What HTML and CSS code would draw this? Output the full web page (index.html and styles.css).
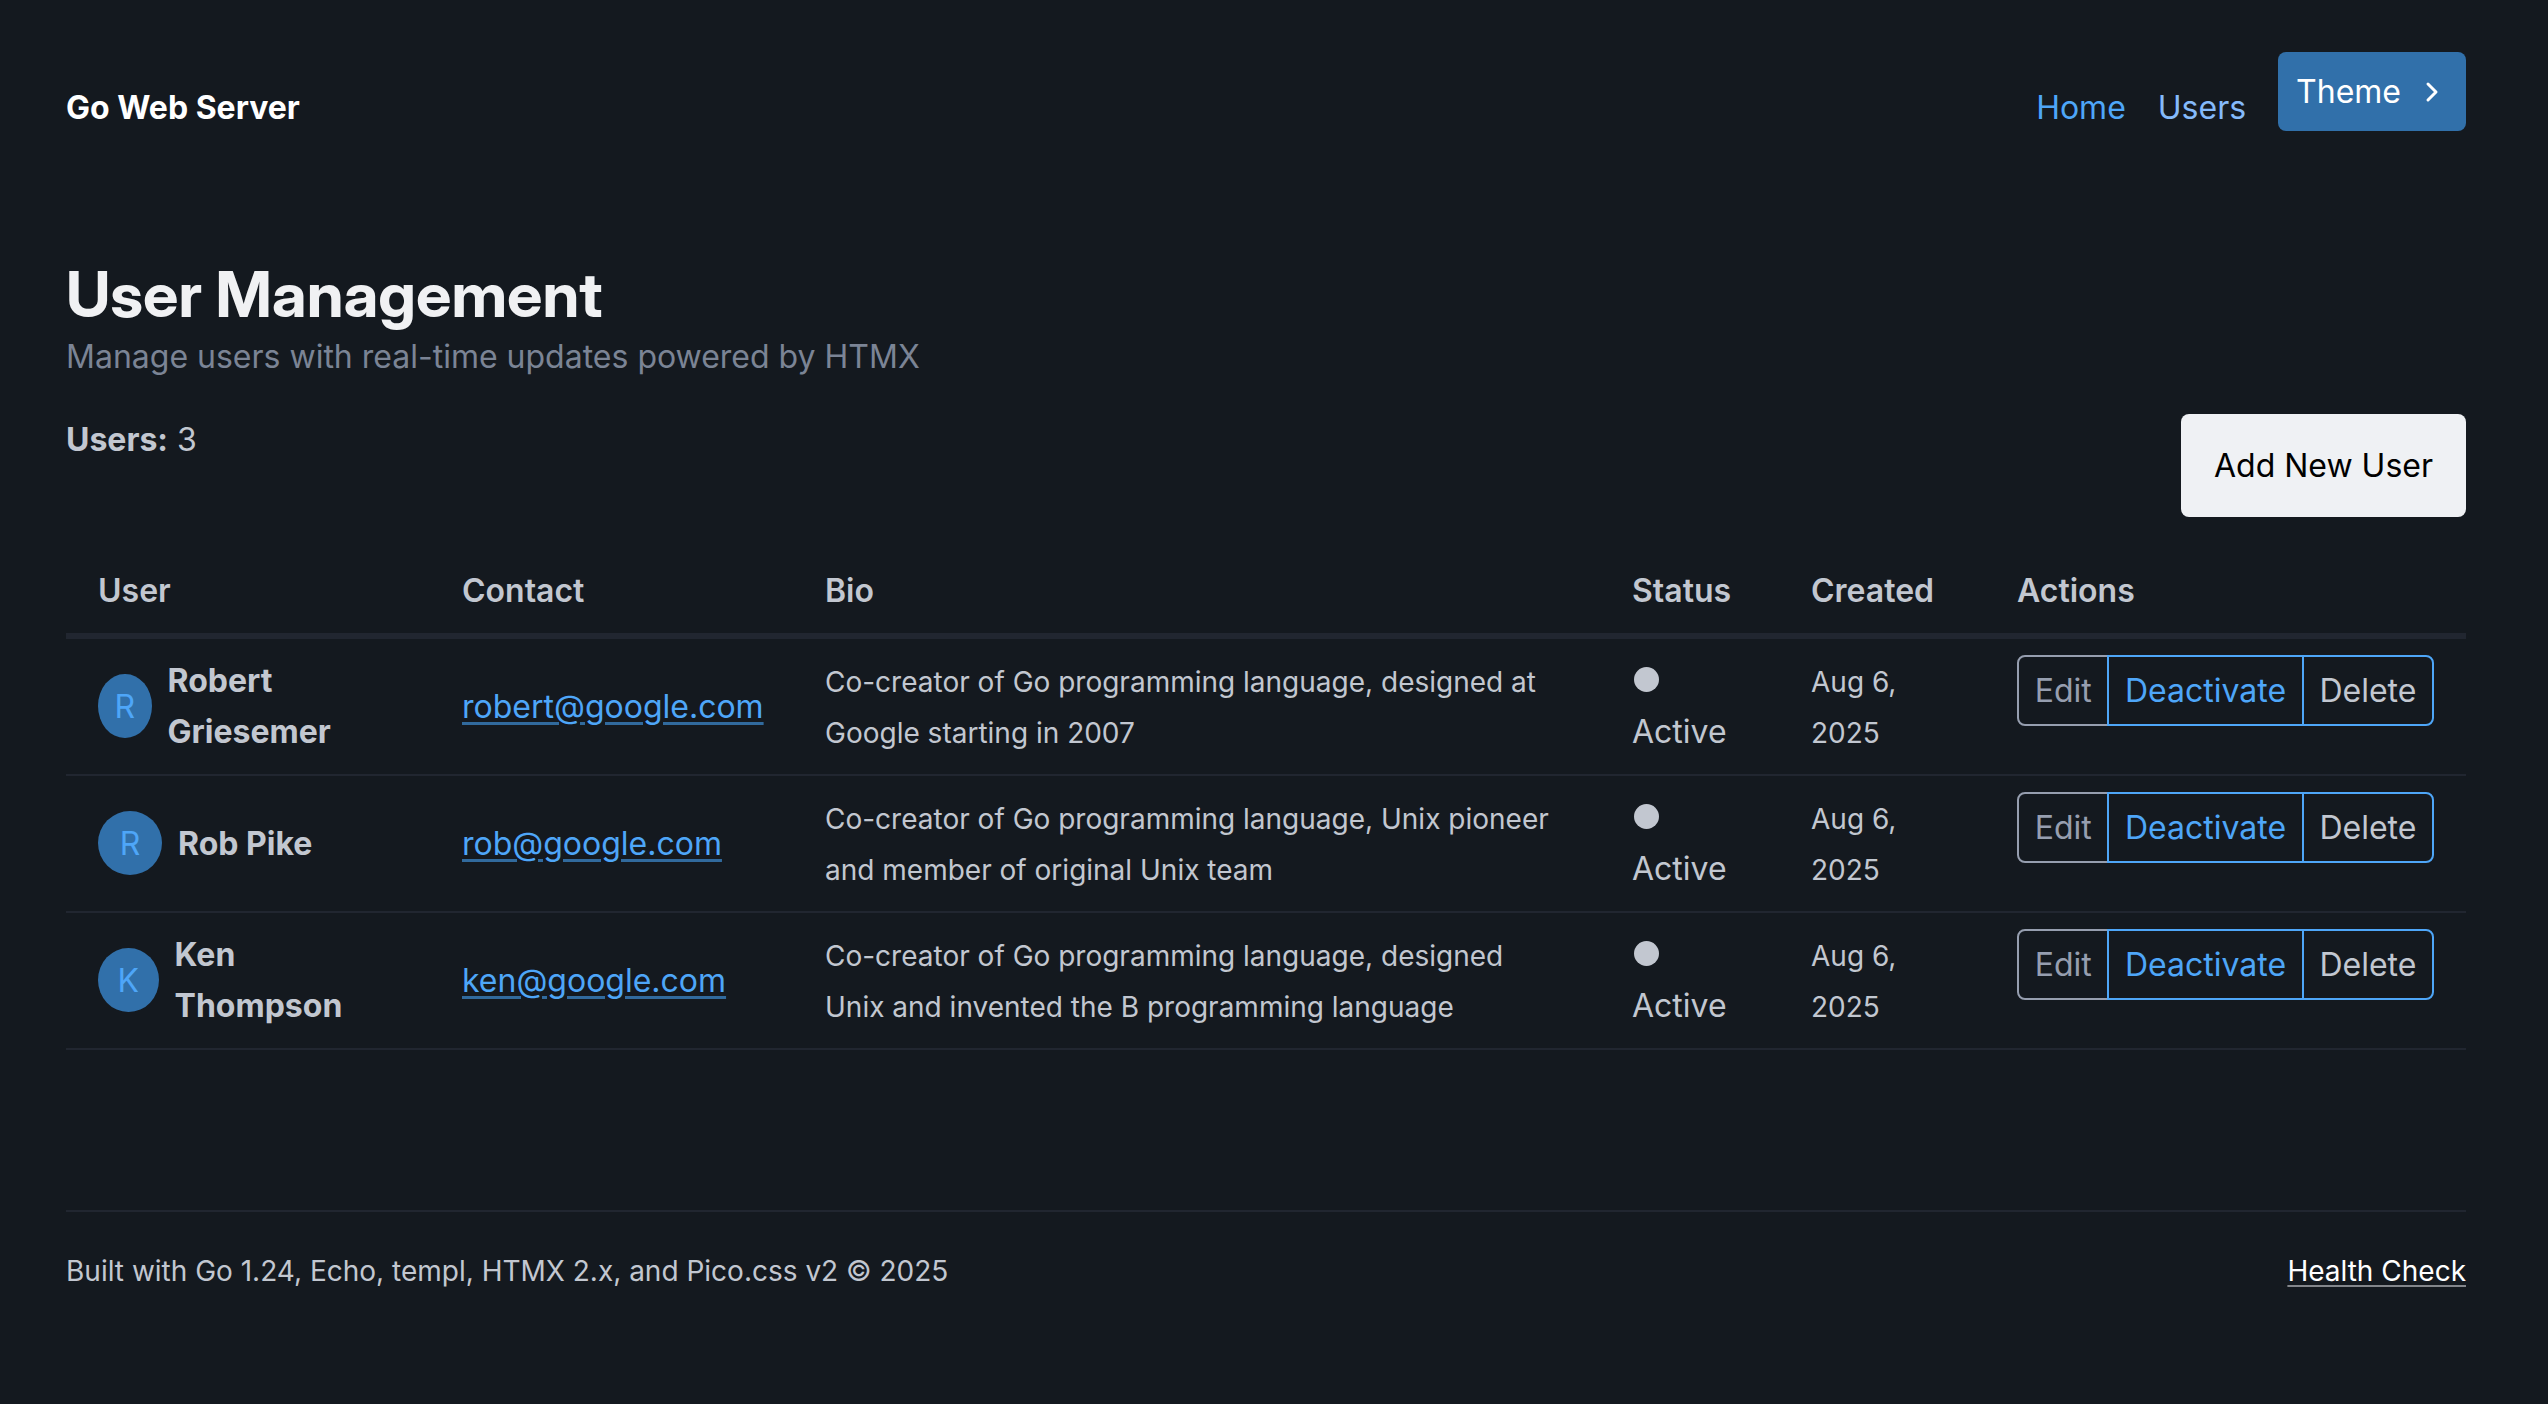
FILE: index.html
```html
<!DOCTYPE html>
<html lang="en">
<head>
<meta charset="utf-8">
<meta name="viewport" content="width=device-width, initial-scale=1">
<title>User Management - Go Web Server</title>
<link rel="stylesheet" href="styles.css">
</head>
<body>
<header class="site-header">
  <a class="brand" href="#">Go Web Server</a>
  <nav class="site-nav">
    <a class="nav-link" href="#">Home</a>
    <a class="nav-link nav-link-current" href="#users">Users</a>
    <button class="theme-button" type="button">Theme
      <svg class="chevron" viewBox="0 0 32 32" aria-hidden="true"><path d="M12 8l8 8-8 8"/></svg>
    </button>
  </nav>
</header>

<main class="page" id="users">
  <h1 class="page-title">User Management</h1>
  <p class="page-subtitle">Manage users with real-time updates powered by HTMX</p>

  <div class="toolbar">
    <div><strong>Users:</strong> 3</div>
    <button class="add-button" type="button">Add New User</button>
  </div>

  <table class="users">
    <colgroup>
      <col class="col-user"><col class="col-contact"><col class="col-bio">
      <col class="col-status"><col class="col-created"><col class="col-actions">
    </colgroup>
    <thead>
      <tr>
        <th scope="col">User</th><th scope="col">Contact</th><th scope="col">Bio</th>
        <th scope="col">Status</th><th scope="col">Created</th><th scope="col">Actions</th>
      </tr>
    </thead>
    <tbody>
      <tr>
        <td><div class="person"><div class="avatar">R</div><strong>Robert Griesemer</strong></div></td>
        <td><a class="mail" href="mailto:robert@google.com">robert@google.com</a></td>
        <td><small>Co-creator of Go programming language, designed at Google starting in 2007</small></td>
        <td><span class="dot"></span> Active</td>
        <td><small>Aug 6, 2025</small></td>
        <td><div class="actions"><button class="action action-edit" type="button">Edit</button><button class="action action-toggle" type="button">Deactivate</button><button class="action action-delete" type="button">Delete</button></div></td>
      </tr>
      <tr>
        <td><div class="person"><div class="avatar">R</div><strong>Rob Pike</strong></div></td>
        <td><a class="mail" href="mailto:rob@google.com">rob@google.com</a></td>
        <td><small>Co-creator of Go programming language, Unix pioneer and member of original Unix team</small></td>
        <td><span class="dot"></span> Active</td>
        <td><small>Aug 6, 2025</small></td>
        <td><div class="actions"><button class="action action-edit" type="button">Edit</button><button class="action action-toggle" type="button">Deactivate</button><button class="action action-delete" type="button">Delete</button></div></td>
      </tr>
      <tr>
        <td><div class="person"><div class="avatar">K</div><strong>Ken Thompson</strong></div></td>
        <td><a class="mail" href="mailto:ken@google.com">ken@google.com</a></td>
        <td><small>Co-creator of Go programming language, designed Unix and invented the B programming language</small></td>
        <td><span class="dot"></span> Active</td>
        <td><small>Aug 6, 2025</small></td>
        <td><div class="actions"><button class="action action-edit" type="button">Edit</button><button class="action action-toggle" type="button">Deactivate</button><button class="action action-delete" type="button">Delete</button></div></td>
      </tr>
    </tbody>
  </table>
</main>

<footer class="site-footer">
  <small>Built with Go 1.24, Echo, templ, HTMX 2.x, and Pico.css v2 © 2025</small>
  <small><a class="health" href="#">Health Check</a></small>
</footer>
</body>
</html>
```
FILE: styles.css
```css
:root {
  --bg: #14191f;
  --text: #c2c7d0;
  --muted: #7b8495;
  --border: #212630;
  --primary: #4ea6f8;
  --primary-bg: #3170aa;
}

* { box-sizing: border-box; }

body {
  margin: 0;
  padding: 0 82px 0 66px;
  background: var(--bg);
  color: var(--text);
  font-family: Inter, "Liberation Sans", sans-serif;
  font-size: 32px;
  line-height: 51px;
}

button {
  margin: 0;
  font: inherit;
  cursor: pointer;
}

a { text-decoration: none; }
strong { font-weight: 700; }

small {
  font-size: 28px;
  line-height: 45px;
}

.site-header {
  display: flex;
  justify-content: space-between;
  padding-top: 52px;
}

.brand {
  padding: 30px 0 28px;
  color: #fff;
  font-weight: 700;
}

.site-nav {
  display: flex;
  align-items: flex-start;
  gap: 32px;
}

.nav-link {
  padding: 30px 0 28px;
  color: var(--primary);
}

.nav-link-current { color: #85bafb; }

.theme-button {
  display: flex;
  align-items: center;
  gap: 15px;
  padding: 14px 18px;
  border: 0;
  border-radius: 8px;
  background: var(--primary-bg);
  color: #fff;
}

.chevron {
  width: 32px;
  height: 32px;
  fill: none;
  stroke: currentColor;
  stroke-width: 3;
  stroke-linecap: round;
  stroke-linejoin: round;
}

.page { padding-top: 96px; }

.page-title {
  margin: 0;
  color: #f0f1f3;
  font-family: "Inter Display", Inter, "Liberation Sans", sans-serif;
  font-size: 63px;
  font-weight: 700;
  line-height: 74px;
}

.page-subtitle {
  margin: 0 0 32px;
  color: var(--muted);
}

.toolbar {
  display: flex;
  justify-content: space-between;
  align-items: flex-start;
  margin-bottom: 31px;
}

.add-button {
  padding: 26px 33px;
  border: 0;
  border-radius: 8px;
  background: #eff1f4;
  color: #000;
}

.users {
  width: 100%;
  table-layout: fixed;
  border-collapse: separate;
  border-spacing: 0;
}

.col-user { width: 364px; }
.col-contact { width: 363px; }
.col-status { width: 179px; }
.col-created { width: 206px; }
.col-actions { width: 481px; }

.users th {
  padding: 17px 32px;
  border-bottom: 6px solid var(--border);
  font-weight: 600;
  text-align: left;
}

.users td {
  padding: 16px 32px 17px;
  border-bottom: 2px solid var(--border);
  vertical-align: middle;
}

.person {
  display: flex;
  align-items: center;
  gap: 16px;
}

.avatar {
  display: flex;
  align-items: center;
  justify-content: center;
  width: 64px;
  height: 64px;
  border-radius: 50%;
  background: var(--primary-bg);
  color: var(--primary);
}

.mail {
  color: var(--primary);
  text-decoration: underline;
  text-decoration-color: #316a9d;
  text-decoration-thickness: 3px;
  text-underline-offset: 4px;
}

.dot {
  display: inline-block;
  width: 25px;
  height: 25px;
  margin: 0 20px 0 2px;
  border-radius: 50%;
  background: var(--text);
}

.actions {
  display: flex;
  margin-bottom: 31px;
}

.action {
  flex: 1 1 auto;
  padding: 8px 15px;
  border: 2px solid var(--primary);
  background: transparent;
  color: var(--text);
}

.action + .action { margin-left: -2px; }

.action-edit {
  border-color: #969eaf;
  border-radius: 8px 0 0 8px;
  color: #969eaf;
}

.action-toggle { color: var(--primary); }
.action-delete { border-radius: 0 8px 8px 0; }

.site-footer {
  display: flex;
  justify-content: space-between;
  margin-top: 160px;
  padding: 37px 0 64px;
  border-top: 2px solid var(--border);
}

.health {
  color: #fff;
  text-decoration: underline;
  text-decoration-color: #83868b;
  text-decoration-thickness: 2px;
  text-underline-offset: 4px;
}
```
